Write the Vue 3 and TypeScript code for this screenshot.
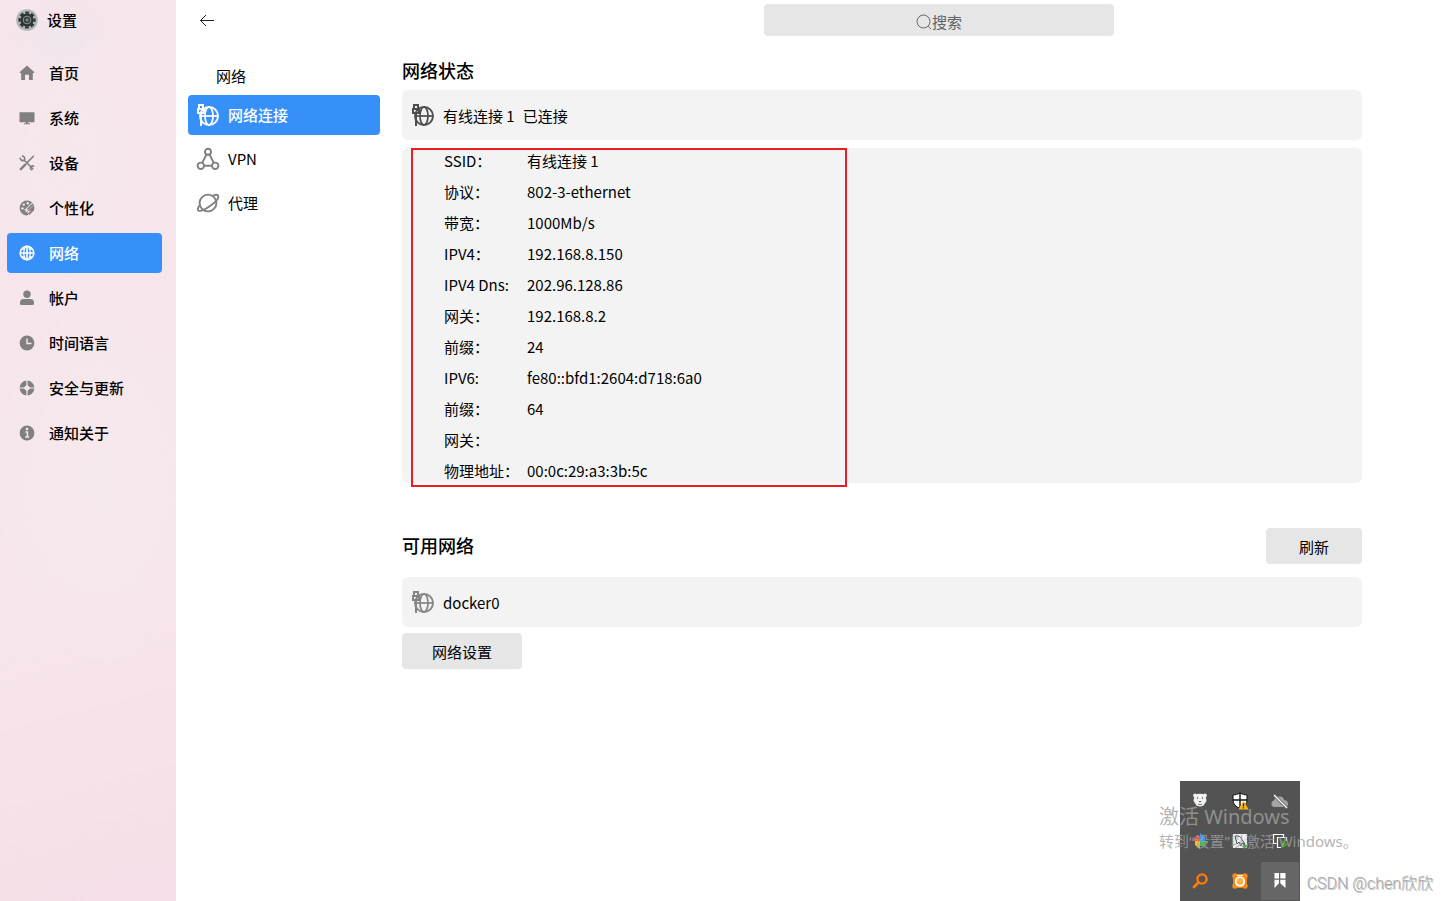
<script setup lang="ts">
import { ref } from 'vue'

interface NavItem {
  id: string
  label: string
}

const sections: NavItem[] = [
  { id: 'home', label: '首页' },
  { id: 'system', label: '系统' },
  { id: 'devices', label: '设备' },
  { id: 'personal', label: '个性化' },
  { id: 'network', label: '网络' },
  { id: 'account', label: '帐户' },
  { id: 'time', label: '时间语言' },
  { id: 'security', label: '安全与更新' },
  { id: 'about', label: '通知关于' },
]

const pages: NavItem[] = [
  { id: 'wired', label: '网络连接' },
  { id: 'vpn', label: 'VPN' },
  { id: 'proxy', label: '代理' },
]

const details = [
  { label: 'SSID：', value: '有线连接 1' },
  { label: '协议：', value: '802-3-ethernet' },
  { label: '带宽：', value: '1000Mb/s' },
  { label: 'IPV4：', value: '192.168.8.150' },
  { label: 'IPV4 Dns:', value: '202.96.128.86' },
  { label: '网关：', value: '192.168.8.2' },
  { label: '前缀：', value: '24' },
  { label: 'IPV6:', value: 'fe80::bfd1:2604:d718:6a0' },
  { label: '前缀：', value: '64' },
  { label: '网关：', value: '' },
  { label: '物理地址：', value: '00:0c:29:a3:3b:5c' },
]

const section = ref('network')
const page = ref('wired')
const query = ref('')
</script>

<template>
  <div class="window">
    <svg class="defs" aria-hidden="true">
      <symbol id="wired-globe" viewBox="0 0 24 24">
        <g fill="none" stroke="currentColor">
          <circle cx="13" cy="13" r="9" stroke-width="1.9" />
          <ellipse cx="13" cy="13" rx="4" ry="9" stroke-width="1.7" />
          <path d="M6 13h16" stroke-width="1.7" />
          <path d="M5 11v12" stroke-width="2" />
          <path d="M3 6V2h4v4" stroke-width="2" />
          <path d="M2 6h6v4H2z" stroke-width="2" />
        </g>
      </symbol>
    </svg>

    <aside class="sidebar">
      <div class="brand">
        <svg class="brand-icon" viewBox="0 0 22 22" aria-hidden="true">
          <circle cx="11" cy="11" r="10.8" fill="#b3b6b6" />
          <circle cx="11" cy="11" r="6.6" fill="#303538" />
          <circle cx="11" cy="11" r="7.4" fill="none" stroke="#303538" stroke-width="2.4" stroke-dasharray="3.6 2.21" stroke-dashoffset="1.8" />
          <circle cx="11" cy="11" r="3.8" fill="none" stroke="#8f9496" stroke-width="1" />
          <circle cx="11" cy="11" r="1.8" fill="#7c8184" />
        </svg>
        <span>设置</span>
      </div>
      <nav class="sections">
        <button
          v-for="item in sections"
          :key="item.id"
          type="button"
          class="section"
          :class="{ active: section === item.id }"
          @click="section = item.id"
        >
          <svg class="section-icon" viewBox="0 0 16 16" aria-hidden="true">
            <path v-if="item.id === 'home'" fill="currentColor" d="M8 .6 15.2 7v.9h-1.4v7H10V9.8H6v5.1H2.2v-7H.8V7z" />
            <path v-else-if="item.id === 'system'" fill="currentColor" d="M.5 2.2h15v10H9v1h2v1.1H5v-1.1h2v-1H.5z" />
            <g v-else-if="item.id === 'devices'" fill="none" stroke="currentColor" stroke-linecap="round">
              <path stroke-width="1.6" d="M5 5l8.8 8.8M14.4 1.3L7.6 8.1" />
              <path stroke-width="2.4" d="M6.3 9.6L1.800 14.1" />
              <path stroke-width="1.6" d="M1.2 3.2c.3 2.4 2.7 3 4.1 1.9 1-1.4.5-3.7-1.8-4M14.6 11.2c-1.6-1-3.4.5-3.2 2.1.2.8.7 1.3 1.3 1.5" />
            </g>
            <g v-else-if="item.id === 'personal'">
              <path fill="currentColor" d="M8 .6a7.4 7.4 0 1 0 0 14.8c1.2 0 1.3-1 .8-1.9-.7-1.5.1-2.7 1.7-2.7h2.6c1.6 0 2.3-1.3 2.3-2.8C15.4 4 12.2.6 8 .6z" />
              <g fill="#f6e6ec"><circle cx="3.5" cy="8.4" r="1.2" /><circle cx="4.8" cy="4.6" r="1.2" /><circle cx="8.8" cy="3.2" r="1.2" /></g>
              <path d="M14.8 3.2L6 11.4" stroke="#f6e6ec" stroke-width="3" />
              <path d="M14.3 4L8.5 9.3M6.6 10.5l-2.2 2.1" stroke="currentColor" stroke-width="1.7" />
              <path d="M9.6 14.2l5-4.8" stroke="currentColor" stroke-width="2" />
            </g>
            <g v-else-if="item.id === 'network'" fill="none" stroke="currentColor">
              <circle cx="8" cy="8" r="6.8" stroke-width="1.6" />
              <ellipse cx="8" cy="8" rx="3.2" ry="6.8" stroke-width="1.3" />
              <path d="M8 1v14M1 8h14" stroke-width="1.6" />
              <path d="M3 4h3M10 4h3M3 12h3M10 12h3" stroke-width="1.3" />
            </g>
            <g v-else-if="item.id === 'account'" fill="currentColor">
              <circle cx="8" cy="4.2" r="3.7" />
              <path d="M1 12.4C1 10.2 2.6 9 4.6 9h6.8c2 0 3.6 1.2 3.6 3.4v1.4c0 .7-.5 1.2-1.2 1.2H2.2c-.7 0-1.2-.5-1.2-1.2z" />
            </g>
            <g v-else-if="item.id === 'time'">
              <circle cx="8" cy="8" r="7.4" fill="currentColor" />
              <path d="M8 3.5V8.5h4.5" fill="none" stroke="#f6e6ec" stroke-width="1.4" />
            </g>
            <g v-else-if="item.id === 'security'">
              <circle cx="8" cy="8" r="7.4" fill="currentColor" />
              <path d="M8 0v5M8 11v5M0 8h5M11 8h5" stroke="#f6e6ec" stroke-width="1.2" />
              <path d="M8 4.500 11.5 8 8 11.5 4.500 8z" fill="#f6e6ec" />
            </g>
            <g v-else>
              <circle cx="8" cy="8" r="7.4" fill="currentColor" />
              <path d="M6.4 7h2v5M6.200 12h4" fill="none" stroke="#f6e6ec" stroke-width="1.5" />
              <circle cx="8" cy="4" r="1.3" fill="#f6e6ec" />
            </g>
          </svg>
          <span>{{ item.label }}</span>
        </button>
      </nav>
    </aside>

    <div class="content">
      <header class="topbar">
        <button type="button" class="back" aria-label="返回">
          <svg viewBox="0 0 16 16" aria-hidden="true">
            <path d="M15 8.500H1.500M7 3L1.500 8.500 7 14" fill="none" stroke="#222" stroke-width="1" />
          </svg>
        </button>
        <div class="search-area">
          <label class="search">
            <svg viewBox="0 0 16 16" aria-hidden="true">
              <circle cx="7.500" cy="7.500" r="6.500" fill="none" stroke="#666c6e" />
              <path d="M12.200 12.200L15 15" stroke="#666c6e" />
            </svg>
            <input v-model="query" type="text" placeholder="搜索" aria-label="搜索" />
          </label>
        </div>
      </header>

      <div class="columns">
        <nav class="pages">
          <h2 class="pages-title">网络</h2>
          <button
            v-for="item in pages"
            :key="item.id"
            type="button"
            class="page"
            :class="{ active: page === item.id }"
            @click="page = item.id"
          >
            <svg viewBox="0 0 24 24" aria-hidden="true">
              <use v-if="item.id === 'wired'" href="#wired-globe" />
              <g v-else-if="item.id === 'vpn'" fill="none" stroke="currentColor" stroke-width="1.9">
                <circle cx="12" cy="4.800" r="3" />
                <circle cx="4.800" cy="18.800" r="3.200" />
                <circle cx="19.200" cy="18.800" r="3.200" />
                <path d="M10.500 7.500L6.200 15.800M13.500 7.500l4.300 8.300M8 18.800h8" />
              </g>
              <g v-else fill="none" stroke="currentColor" stroke-width="1.9">
                <circle cx="12" cy="12" r="8.400" />
                <path d="M16.800 4.800c2.800-1.300 4.600-1.300 5.200-.3 1 2-1.800 6-7 9.800-5.400 4-10.800 6.300-12.600 5.200-1.200-.8-.5-3 1.600-5.800" />
              </g>
            </svg>
            <span>{{ item.label }}</span>
          </button>
        </nav>

        <main class="main">
          <h1 class="heading">网络状态</h1>
          <div class="card">
            <svg class="card-icon" viewBox="0 0 24 24" aria-hidden="true"><use href="#wired-globe" /></svg>
            <span>有线连接 1</span>
            <span class="state">已连接</span>
          </div>

          <div class="details-card">
            <dl class="details">
              <div v-for="(row, index) in details" :key="index" class="detail">
                <dt>{{ row.label }}</dt>
                <dd>{{ row.value }}</dd>
              </div>
            </dl>
            <div class="highlight"></div>
          </div>

          <div class="available">
            <h1 class="heading">可用网络</h1>
            <button type="button" class="action">刷新</button>
          </div>
          <div class="card">
            <svg class="card-icon muted" viewBox="0 0 24 24" aria-hidden="true"><use href="#wired-globe" /></svg>
            <span>docker0</span>
          </div>
          <button type="button" class="action wide">网络设置</button>
        </main>
      </div>
    </div>

    <div class="tray">
      <button type="button" class="tray-item" aria-label="Bear">
        <svg viewBox="0 0 20 20" aria-hidden="true">
          <circle cx="5" cy="4.500" r="1.900" fill="#e8e8e8" /><circle cx="15" cy="4.500" r="1.900" fill="#e8e8e8" />
          <path d="M4.500 4Q10 1.500 15.500 4L16.500 10l-3 4.500q-3.500 2-7 0L3.500 10z" fill="#f2f2f2" />
          <circle cx="7.500" cy="7" r=".7" fill="#444" /><circle cx="12.500" cy="7" r=".7" fill="#444" />
          <path d="M8.700 10h2.600L10 11.600z" fill="#444" /><path d="M8 13.200q2 1 4 0" fill="none" stroke="#777" />
        </svg>
      </button>
      <button type="button" class="tray-item" aria-label="Security">
        <svg viewBox="0 0 20 20" aria-hidden="true">
          <path d="M10 2q3.500 2 7 2v5q0 5.500-7 8.500Q3 14.500 3 9V4q3.500 0 7-2z" fill="#fff" stroke="#111" />
          <path d="M10 2v15M3 9h14" stroke="#111" stroke-width="1.400" />
          <path d="M13.500 9.500L18.500 18.500H8.500z" fill="#fcb714" />
          <path d="M13.500 12.500v3M13.500 16.300v1.200" stroke="#222" stroke-width="1.300" />
        </svg>
      </button>
      <button type="button" class="tray-item" aria-label="Cloud">
        <svg viewBox="0 0 20 20" aria-hidden="true">
          <path d="M4.500 16a3.300 3.300 0 0 1-.5-6.500q1.500-4.500 5.500-4Q13 5 14 9q4 .5 4 4 0 3-3 3z" fill="#a5a5a5" />
          <path d="M4 4l13 13" stroke="#666" stroke-width="3" /><path d="M4 4l13 13" stroke="#fff" stroke-width="1.300" />
        </svg>
      </button>
      <button type="button" class="tray-item" aria-label="Pinwheel">
        <svg viewBox="0 0 20 20" aria-hidden="true">
          <path d="M10 10V2l5 4v4z" fill="#4296f4" /><path d="M10 10h8l-4 5h-4z" fill="#35bd45" />
          <path d="M10 10v8l-5-4v-4z" fill="#f9bd2d" /><path d="M10 10H2l4-5h4z" fill="#eb5648" />
        </svg>
      </button>
      <button type="button" class="tray-item" aria-label="Database">
        <svg viewBox="0 0 20 20" aria-hidden="true">
          <path d="M3 3h14v14H3z" fill="#eef0f0" />
          <path d="M5 5q5-1 7 3.500L15 13l-3-1-1 3-2-4-2 2q-1-4-2-8z" fill="none" stroke="#40494e" />
          <path d="M13 12l5 3-5 3z" fill="#3bac49" />
        </svg>
      </button>
      <button type="button" class="tray-item" aria-label="Virtual machine">
        <svg viewBox="0 0 20 20" aria-hidden="true">
          <path d="M6.500 12.500h-3v-9h10v3M11 16.500H7.500v-10h9V10" fill="none" stroke="#fff" stroke-width="1.200" />
          <path d="M11.500 9.500l7 4-7 4z" fill="#3c9d20" />
        </svg>
      </button>
      <button type="button" class="tray-item" aria-label="Search">
        <svg viewBox="0 0 20 20" aria-hidden="true">
          <circle cx="12" cy="8" r="4.600" fill="none" stroke="#ff7b09" stroke-width="2.400" />
          <path d="M8.700 11.300L3.200 16.800" stroke="#ff7b09" stroke-width="2.800" />
        </svg>
      </button>
      <button type="button" class="tray-item" aria-label="Assistant">
        <svg viewBox="0 0 20 20" aria-hidden="true">
          <rect x="3" y="3" width="14" height="14" rx="4" fill="#f58110" />
          <g fill="#f58c20"><circle cx="5" cy="5" r="2.700" /><circle cx="15" cy="5" r="2.700" /><circle cx="5" cy="15" r="2.700" /><circle cx="15" cy="15" r="2.700" /></g>
          <circle cx="10" cy="10.500" r="4.300" fill="#ffb33c" stroke="#fff" stroke-width="1.800" /><path d="M7 4.500h6" stroke="#ffe6bf" stroke-width="1.400" />
        </svg>
      </button>
      <button type="button" class="tray-item current" aria-label="Bookmark">
        <svg viewBox="0 0 20 20" aria-hidden="true">
          <path d="M4.500 2H9v5.500H4.500zM10.300 2h5.200v5.500h-5.200zM4.500 8.700H9v3.500L4.500 17zM10.300 8.700h5.200V17l-5.200-4.800z" fill="#fff" />
        </svg>
      </button>
    </div>

    <div class="activation">
      <p class="activation-title">激活 Windows</p>
      <p class="activation-text">转到“设置”以激活 Windows。</p>
    </div>
    <p class="credit">CSDN @chen欣欣</p>
  </div>
</template>

<style>
body {
  margin: 0;
  background: #fff;
}
</style>

<style scoped>
.window {
  position: relative;
  display: flex;
  min-height: 100vh;
  overflow: hidden;
  background: #fff;
  color: #000;
  font-family: "Noto Sans CJK SC", sans-serif;
  font-size: 15px;
  line-height: 20px;
}

button {
  margin: 0;
  padding: 0;
  border: 0;
  background: none;
  color: inherit;
  font: inherit;
  cursor: pointer;
}

svg {
  display: block;
  flex: none;
}

.defs {
  position: absolute;
  width: 0;
  height: 0;
}

.sidebar {
  box-sizing: border-box;
  flex: none;
  width: 176px;
  padding: 0 14px 0 7px;
  background:
    radial-gradient(ellipse 50px 40px at 60px 38px, #efe6ee, transparent),
    radial-gradient(ellipse 90px 150px at 60px 150px, #f5e8eb, transparent),
    radial-gradient(ellipse 120px 200px at 100px 480px, #f6e9ed, transparent),
    linear-gradient(165deg, #f6e5eb 0%, #f6e6ec 60%, #f6e4ea 75%, #f5dee7 100%);
  font-weight: 500;
}

.brand {
  display: flex;
  align-items: center;
  gap: 9px;
  height: 40px;
  padding-left: 9px;
}

.brand-icon {
  width: 22px;
  height: 22px;
}

.sections {
  display: flex;
  flex-direction: column;
  gap: 5px;
  padding-top: 13px;
}

.section {
  display: flex;
  align-items: center;
  gap: 14px;
  height: 40px;
  padding-left: 12px;
  border-radius: 4px;
}

.section-icon {
  width: 16px;
  height: 16px;
  color: #808080;
}

.active,
.active .section-icon,
.active svg {
  color: #fff;
}

.active {
  background: #3790fa;
  font-weight: 500;
}

.content {
  flex: 1;
  min-width: 0;
}

.topbar {
  display: flex;
  align-items: center;
  height: 40px;
}

.back {
  display: grid;
  place-items: center;
  width: 40px;
  height: 32px;
  margin-left: 11px;
}

.back svg {
  width: 16px;
  height: 16px;
}

.search-area {
  display: flex;
  flex: 1;
  justify-content: center;
  padding-left: 203px;
}

.search {
  display: flex;
  align-items: center;
  justify-content: center;
  box-sizing: border-box;
  width: 350px;
  height: 32px;
  padding-top: 3px;
  border-radius: 4px;
  background: #e6e6e6;
}

.search svg {
  width: 16px;
  height: 16px;
}

.search input {
  width: 30px;
  height: 28px;
  padding: 0;
  border: 0;
  outline: 0;
  background: none;
  color: #333;
  font: inherit;
}

.search input::placeholder {
  color: #5d6466;
  opacity: 1;
}

.columns {
  display: flex;
  gap: 22px;
  padding: 18px 86px 0 12px;
}

.pages {
  display: flex;
  flex: none;
  flex-direction: column;
  gap: 4px;
  width: 192px;
}

.pages-title {
  margin: 0;
  padding: 8px 0 5px 28px;
  font-size: 15px;
  font-weight: 400;
}

.page {
  display: flex;
  align-items: center;
  gap: 8px;
  height: 40px;
  padding-left: 8px;
  border-radius: 4px;
}

.page svg,
.card-icon {
  width: 24px;
  height: 24px;
}

.page svg {
  color: #808080;
}

.page.active svg {
  color: #fff;
}

.main {
  flex: 1;
  min-width: 0;
}

.heading {
  margin: 0;
  padding-bottom: 2px;
  font-size: 18px;
  font-weight: 500;
  line-height: 24px;
}

.card {
  display: flex;
  align-items: center;
  gap: 8px;
  box-sizing: border-box;
  height: 50px;
  margin-top: 6px;
  padding: 2px 9px 0;
  border-radius: 6px;
  background: #f3f3f3;
}

.card-icon {
  margin-bottom: 2px;
  color: #4d4d4d;
}

.card-icon.muted {
  color: #858585;
}

.details-card {
  position: relative;
  margin-top: 8px;
  border-radius: 6px;
  background: #f3f3f3;
}

.details {
  display: flex;
  flex-direction: column;
  gap: 6px;
  margin: 0;
  padding-left: 42px;
}

.detail {
  display: flex;
  line-height: 25px;
}

.detail dt {
  width: 83px;
}

.detail dd {
  margin: 0;
}

.highlight {
  position: absolute;
  inset: 0 auto -4px 9px;
  box-sizing: border-box;
  width: 436px;
  border: 2px solid #ed1c24;
  pointer-events: none;
}

.available {
  display: flex;
  align-items: center;
  justify-content: space-between;
  margin: 45px 0 13px;
}

.available + .card {
  margin: 0 0 6px;
}

.action {
  width: 96px;
  height: 36px;
  padding-top: 2px;
  border-radius: 4px;
  background: #e6e6e6;
}

.action.wide {
  width: 120px;
}

.tray {
  position: absolute;
  right: 148px;
  bottom: 0;
  display: grid;
  grid-template-columns: repeat(3, 40px);
  grid-auto-rows: 40px;
  background: #535353;
}

.tray-item {
  display: grid;
  place-items: center;
}

.tray-item svg {
  width: 20px;
  height: 20px;
}

.tray-item.current {
  margin: 1px;
  background: #666;
}

.activation {
  position: absolute;
  right: 88px;
  bottom: 49px;
  width: 201px;
  color: rgba(160, 160, 160, 0.8);
  font-family: "Noto Sans", "Noto Sans CJK SC", sans-serif;
  white-space: nowrap;
  pointer-events: none;
}

.activation p {
  margin: 0;
}

.activation-title {
  font-size: 20px;
  line-height: 26px;
}

.activation-text {
  font-size: 15px;
  line-height: 22px;
}

.credit {
  position: absolute;
  right: 15px;
  bottom: 7px;
  margin: 0;
  color: #a6a6a6;
  font-family: Roboto, "Noto Sans CJK SC", sans-serif;
  font-size: 16px;
  font-weight: 300;
  text-shadow: 1px 1px 0 #c4c4c4;
}
</style>
